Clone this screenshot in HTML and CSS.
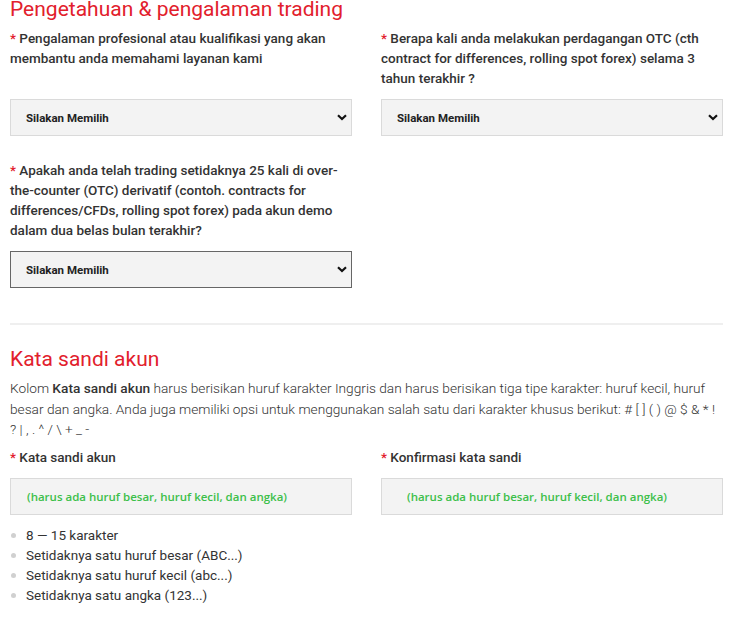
FILE: index.html
```html
<!DOCTYPE html>
<html lang="id">
<head>
    <meta charset="UTF-8">
    <title>Pengetahuan &amp; kata sandi</title>
    <link rel="stylesheet" href="styles.css">
</head>
<body>
    <div class="page">
        <section class="block">
            <h2 class="block-title block-title--first">Pengetahuan &amp; pengalaman trading</h2>
            <div class="fields">
                <div class="field">
                    <label class="field-label"><span class="req">*</span> Pengalaman profesional atau kualifikasi yang akan membantu anda memahami layanan kami</label>
                    <div class="select-wrap">
                        <select class="select"><option>Silakan Memilih</option></select>
                        <svg class="select-arrow" width="10" height="7" viewBox="0 0 10 7"><path d="M1 1.2 L5 5 L9 1.2" fill="none" stroke="#111" stroke-width="2.2"/></svg>
                    </div>
                </div>
                <div class="field">
                    <label class="field-label"><span class="req">*</span> Berapa kali anda melakukan perdagangan OTC (cth contract for differences, rolling spot forex) selama 3 tahun terakhir ?</label>
                    <div class="select-wrap">
                        <select class="select"><option>Silakan Memilih</option></select>
                        <svg class="select-arrow" width="10" height="7" viewBox="0 0 10 7"><path d="M1 1.2 L5 5 L9 1.2" fill="none" stroke="#111" stroke-width="2.2"/></svg>
                    </div>
                </div>
                <div class="field">
                    <label class="field-label"><span class="req">*</span> Apakah anda telah trading setidaknya 25 kali di over-the-counter (OTC) derivatif (contoh. contracts for differences/CFDs, rolling spot forex) pada akun demo dalam dua belas bulan terakhir?</label>
                    <div class="select-wrap">
                        <select class="select select--active"><option>Silakan Memilih</option></select>
                        <svg class="select-arrow" width="10" height="7" viewBox="0 0 10 7"><path d="M1 1.2 L5 5 L9 1.2" fill="none" stroke="#111" stroke-width="2.2"/></svg>
                    </div>
                </div>
            </div>
        </section>

        <hr class="divider">

        <section class="block">
            <h2 class="block-title">Kata sandi akun</h2>
            <p class="intro">Kolom <b>Kata sandi akun</b> harus berisikan huruf karakter Inggris dan harus berisikan tiga tipe karakter: huruf kecil, huruf besar dan angka. Anda juga memiliki opsi untuk menggunakan salah satu dari karakter khusus berikut: # [ ] ( ) @ $ &amp; * ! ? | , . ^ / \ + _ -</p>
            <div class="fields fields--pass">
                <div class="field">
                    <label class="field-label"><span class="req">*</span> Kata sandi akun</label>
                    <input class="input" type="password" placeholder="(harus ada huruf besar, huruf kecil, dan angka)">
                    <ul class="rules">
                        <li>8 — 15 karakter</li>
                        <li>Setidaknya satu huruf besar (ABC...)</li>
                        <li>Setidaknya satu huruf kecil (abc...)</li>
                        <li>Setidaknya satu angka (123...)</li>
                    </ul>
                </div>
                <div class="field">
                    <label class="field-label"><span class="req">*</span> Konfirmasi kata sandi</label>
                    <input class="input input--wide" type="password" placeholder="(harus ada huruf besar, huruf kecil, dan angka)">
                </div>
            </div>
        </section>
    </div>
</body>
</html>
```

FILE: styles.css
```css
body {
    margin: 0;
    background-color: #fff;
    font-family: Roboto, "Liberation Sans", sans-serif;
    color: #333;
}
.page {
    padding: 0 18px 0 10px;
}
.block-title {
    margin: 0 0 7px;
    font-size: 21px;
    font-weight: 400;
    line-height: 24px;
    color: #e2202c;
}
.block-title--first {
    margin-top: -3px;
}
.fields {
    display: grid;
    grid-template-columns: 1fr 1fr;
    column-gap: 29px;
    row-gap: 24px;
}
.field {
    display: flex;
    flex-direction: column;
}
.field-label {
    flex: 1;
    margin-bottom: 10px;
    font-size: 13.5px;
    font-weight: 500;
    line-height: 20px;
    color: #333;
}
.fields--pass .field-label {
    flex: none;
    margin-bottom: 11px;
}
.req {
    color: #e2202c;
}
.select-wrap {
    position: relative;
}
.select {
    display: block;
    width: 100%;
    height: 37px;
    margin-top: 1px;
    padding: 0 30px 0 15px;
    box-sizing: border-box;
    appearance: none;
    -webkit-appearance: none;
    background-color: #f3f3f3;
    border: 1px solid #dadada;
    border-radius: 0;
    font-family: Roboto, "Liberation Sans", sans-serif;
    font-size: 11.5px;
    font-weight: 700;
    color: #222;
}
.select--active {
    border-color: #666;
}
.select-arrow {
    position: absolute;
    right: 5px;
    top: 16px;
    pointer-events: none;
}
.divider {
    margin: 35px 0 22px;
    border: 0;
    border-top: 2px solid #efefef;
}
.intro {
    margin: 0 0 7px;
    font-size: 13.7px;
    font-weight: 300;
    line-height: 20.5px;
    color: #333;
}
.intro b {
    font-weight: 500;
}
.input {
    display: block;
    width: 100%;
    height: 37px;
    padding: 0 16px;
    box-sizing: border-box;
    background-color: #f3f3f3;
    border: 1px solid #dadada;
    border-radius: 0;
    font-family: "Open Sans", sans-serif;
    font-size: 11.5px;
}
.input--wide {
    padding-left: 25px;
}
.input::placeholder {
    color: #3cbf4a;
    font-weight: 600;
    opacity: 1;
}
.rules {
    margin: 10px 0 0;
    padding: 0;
    list-style: none;
}
.rules li {
    position: relative;
    padding-left: 16px;
    font-size: 13.5px;
    line-height: 20px;
    color: #333;
}
.rules li::before {
    content: "";
    position: absolute;
    left: 1px;
    top: 8px;
    width: 5px;
    height: 5px;
    border-radius: 50%;
    background-color: #d0d0d0;
}
```
